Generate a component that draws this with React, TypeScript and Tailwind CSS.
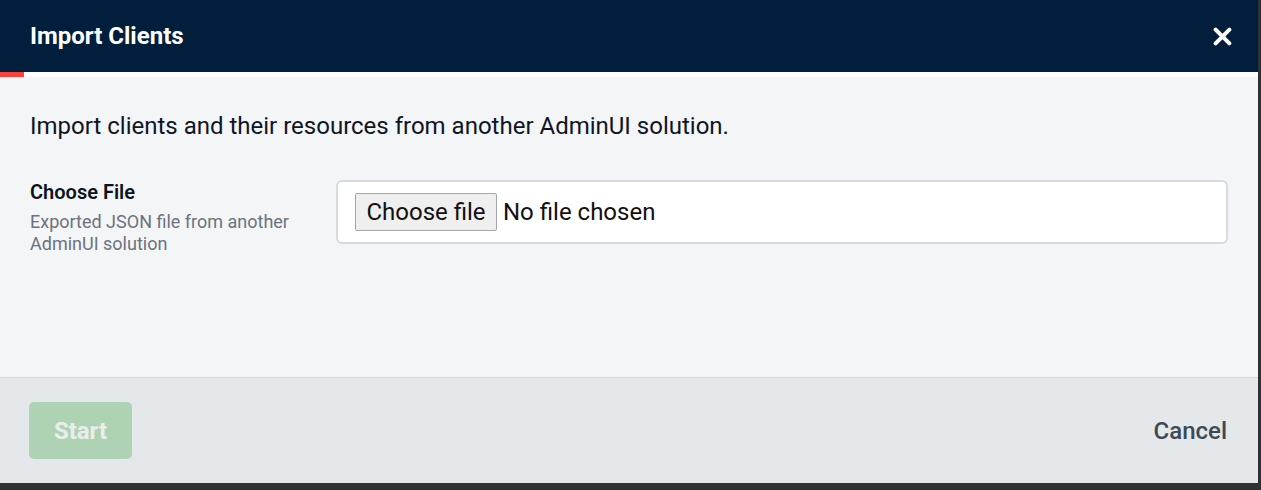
export default function App() {
  return (
    <div
      className="w-[1261px] h-[490px] bg-[#2f3031] overflow-hidden"
      style={{ fontFamily: "Roboto, 'Noto Sans', sans-serif" }}
    >
      <div className="w-[1258px] h-[483px] flex flex-col bg-[#f4f5f7]">
        {/* Header */}
        <div className="h-[72px] bg-[#011e3d] flex items-center justify-between pl-[30px] pr-[26px]">
          <h1 className="text-white text-[24px] font-bold leading-none">Import Clients</h1>
          <button className="text-white w-[20px] h-[20px] flex items-center justify-center">
            <svg width="19" height="19" viewBox="0 0 18 18" fill="none">
              <path d="M2.5 2.5L15.5 15.5M15.5 2.5L2.5 15.5" stroke="white" strokeWidth="3.8" strokeLinecap="round" />
            </svg>
          </button>
        </div>

        {/* Progress */}
        <div className="h-[5px] bg-white">
          <div className="h-full w-[24px] bg-[#f9423a]" />
        </div>

        {/* Body */}
        <div className="flex-1 px-[30px] pt-[35px]">
          <p className="text-[24px] leading-[28px] text-[#0e1626]">
            Import clients and their resources from another AdminUI solution.
          </p>
          <div className="mt-[40px] flex">
            <div className="w-[306px] shrink-0">
              <div className="text-[20px] leading-[24px] font-semibold text-[#0b1320]">Choose File</div>
              <div className="mt-[7px] text-[18px] leading-[22px] text-[#6b7280]">
                Exported JSON file from another
                <br />
                AdminUI solution
              </div>
            </div>
            <div className="flex-1 h-[64px] bg-white border-2 border-[#d7dbe0] rounded-[6px] px-[17px] flex items-center">
              <label className="flex items-center gap-[6px] cursor-pointer">
                <input type="file" className="hidden" />
                <span className="h-[38px] w-[142px] flex items-center justify-center bg-[#efefef] border border-[#a6a6a6] rounded-[2px] text-[24px] text-[#111]">
                  Choose file
                </span>
                <span className="text-[24px] text-[#111]">No file chosen</span>
              </label>
            </div>
          </div>
        </div>

        {/* Footer */}
        <div className="h-[106px] border-t border-[#d5d9de] bg-[#e5e8eb] flex items-center justify-between pl-[29px] pr-[31px]">
          <button
            disabled
            className="w-[103px] h-[57px] rounded-[5px] bg-[#aed3b4] text-[#e9eeea] text-[24px] font-bold"
          >
            Start
          </button>
          <button className="text-[24px] font-medium text-[#3e4955]">Cancel</button>
        </div>
      </div>
    </div>
  );
}
